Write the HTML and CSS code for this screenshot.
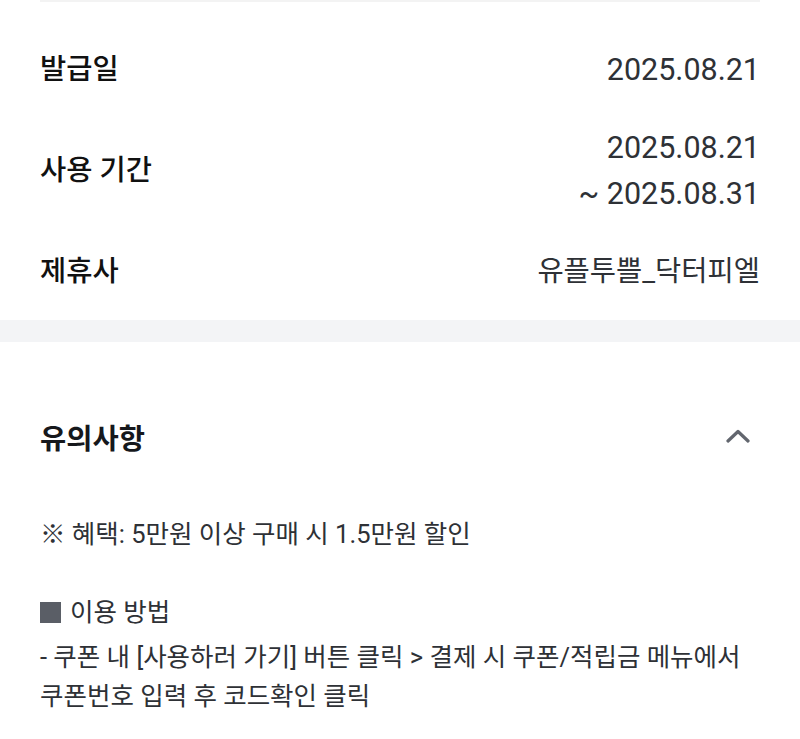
FILE: index.html
```html
<!DOCTYPE html>
<html lang="ko">
<head>
    <meta charset="UTF-8">
    <title>쿠폰 상세</title>
    <link rel="stylesheet" href="styles.css">
</head>
<body>
<div class="info">
    <div class="infoRow">
        <div class="infoLabel">발급일</div>
        <div class="infoValue date">2025.08.21</div>
    </div>
    <div class="infoRow">
        <div class="infoLabel">사용 기간</div>
        <div class="infoValue date">2025.08.21<br>~ 2025.08.31</div>
    </div>
    <div class="infoRow">
        <div class="infoLabel">제휴사</div>
        <div class="infoValue">유플투쁠_닥터피엘</div>
    </div>
</div>
<div class="gap"></div>
<div class="notice">
    <div class="noticeHead">
        <div class="noticeTitle">유의사항</div>
        <svg class="chevron" width="24" height="14" viewBox="0 0 24 14">
            <path d="M2 12 L12 2.5 L22 12" fill="none" stroke="#62666e" stroke-width="3.2" stroke-linecap="round" stroke-linejoin="round"/>
        </svg>
    </div>
    <div class="noticeBody">
        <p>※ 혜택: 5만원 이상 구매 시 1.5만원 할인</p>
        <p class="blank"></p>
        <p class="subTitle"><span class="square"></span>이용 방법</p>
        <p>- 쿠폰 내 [사용하러 가기] 버튼 클릭 &gt; 결제 시 쿠폰/적립금 메뉴에서</p>
        <p>쿠폰번호 입력 후 코드확인 클릭</p>
    </div>
</div>
</body>
</html>
```

FILE: styles.css
```css
body{
    margin:0;
    padding:0;
    background:#fff;
    font-family:Roboto, "Noto Sans CJK KR", sans-serif;
}
.info{
    margin:0 40px;
    border-top:2px solid #f3f3f3;
    padding:45px 0 25px 0;
}
.infoRow{
    display:flex;
    justify-content:space-between;
    align-items:center;
    margin-bottom:32px;
}
.infoRow:last-child{
    margin-bottom:0;
}
.infoLabel{
    font-size:28.5px;
    font-weight:500;
    color:#111;
    line-height:46px;
}
.infoValue{
    font-size:28.5px;
    color:#2e3136;
    line-height:46px;
    text-align:right;
}
.date{
    font-size:30.5px;
}
.gap{
    height:22px;
    background:#f3f4f6;
}
.notice{
    padding:0 40px;
}
.noticeHead{
    display:flex;
    justify-content:space-between;
    align-items:center;
    height:60px;
    margin-top:64px;
}
.noticeTitle{
    font-size:28.5px;
    font-weight:700;
    color:#16181c;
}
.chevron{
    margin-right:10px;
}
.noticeBody{
    margin-top:49px;
    font-size:25.5px;
    color:#2e3136;
}
.noticeBody p{
    margin:0;
    line-height:39px;
    height:39px;
    white-space:nowrap;
}
.noticeBody .subTitle{
    margin-bottom:6px;
}
.square{
    display:inline-block;
    width:21px;
    height:21px;
    background:#5a5e66;
    margin-right:9px;
    vertical-align:-2px;
}
```
